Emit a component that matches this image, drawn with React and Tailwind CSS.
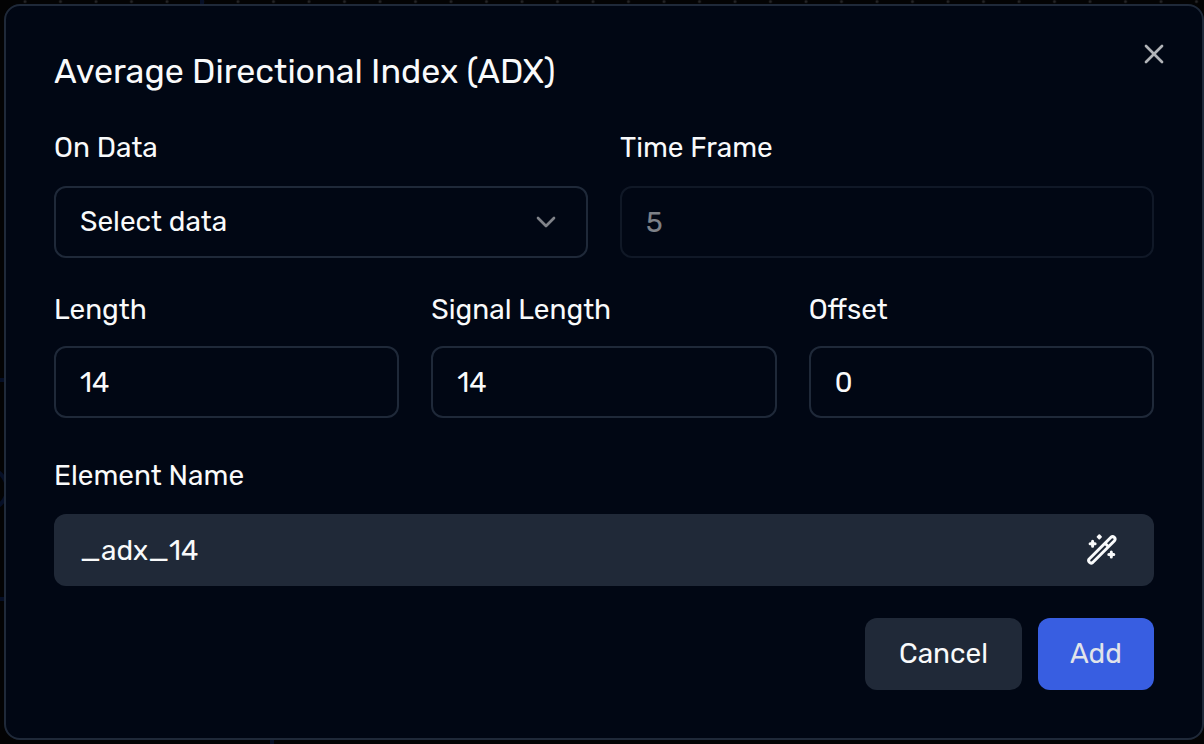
import React, { useState } from 'react';
import { ChevronDown, X } from 'lucide-react';

const params = [
    { id: 'length', label: 'Length' },
    { id: 'signal', label: 'Signal Length' },
    { id: 'offset', label: 'Offset' },
];

const inputClass = 'block h-[72px] w-full rounded-xl border-2 border-[#1f2939] bg-transparent px-6 text-[28px] text-gray-50 outline-none';
const labelClass = 'block text-[28px] leading-7';

const WandIcon = () => (
    <svg width="32" height="32" viewBox="0 0 32 32" fill="none" stroke="currentColor" strokeWidth="3" strokeLinecap="round" strokeLinejoin="round">
        <path d="M25 3.200a2.500 2.500 0 0 1 3.500 3.500L6.700 28.500a2.500 2.500 0 0 1-3.500-3.500Z M19 9.200l3.500 3.500" />
        <path d="M6.600 7.300v5M4.100 9.800h5M25.300 18v5M22.800 20.500h5" />
        <path d="M13.300 1.300l1.600 1.600-1.600 1.600-1.600-1.600Z" strokeWidth="2" fill="currentColor" />
    </svg>
);

// Slice of the strategy canvas that stays visible around the dialog
const CanvasBackdrop = () => (
    <svg className="absolute inset-0 h-full w-full" aria-hidden="true">
        <defs>
            <pattern id="dots" x="7" y="-16" width="35.5" height="35.5" patternUnits="userSpaceOnUse">
                <circle cx="18" cy="17.5" r="1.5" fill="#252527" />
            </pattern>
        </defs>
        <rect width="100%" height="6" fill="url(#dots)" />
        <g fill="none" stroke="#060f26" strokeWidth="4">
            <path d="M202 0v6M0 380h6M0 599h6M272 738v8" />
            <circle cx="-14" cy="489" r="21" />
        </g>
    </svg>
);

const App = () => {
    const [values, setValues] = useState({ length: '14', signal: '14', offset: '0' });
    const [name, setName] = useState('_adx_14');

    return (
        <div className="relative min-h-screen bg-[#030304] py-1 pl-1 font-['Rubik','Roboto',sans-serif] text-gray-50">
            <CanvasBackdrop />
            <div role="dialog" aria-labelledby="title" className="relative rounded-2xl border-2 border-[#1f2939] bg-[#010714] p-12">
                <button type="button" aria-label="Close" className="absolute right-8 top-8 text-[#b2b4b8]">
                    <X size={32} />
                </button>
                <h2 id="title" className="text-[34px] leading-9">Average Directional Index (ADX)</h2>

                <form onSubmit={(e) => e.preventDefault()}>
                    <div className="mt-11 grid grid-cols-2 gap-8">
                        <div className="space-y-6">
                            <label htmlFor="data" className={labelClass}>On Data</label>
                            <div className="relative">
                                <select id="data" className={`${inputClass} appearance-none`}>
                                    <option>Select data</option>
                                </select>
                                <ChevronDown size={32} className="pointer-events-none absolute right-[26px] top-5 text-[#808389]" />
                            </div>
                        </div>
                        <div className="space-y-6">
                            <label htmlFor="frame" className={labelClass}>Time Frame</label>
                            <input id="frame" disabled defaultValue="5" className={`${inputClass} opacity-50`} />
                        </div>
                    </div>

                    <div className="mt-[38px] grid grid-cols-3 gap-8">
                        {params.map((p) => (
                            <div key={p.id} className="space-y-[22px]">
                                <label htmlFor={p.id} className={labelClass}>{p.label}</label>
                                <input
                                    id={p.id}
                                    value={values[p.id]}
                                    onChange={(e) => setValues({ ...values, [p.id]: e.target.value })}
                                    className={inputClass}
                                />
                            </div>
                        ))}
                    </div>

                    <div className="mt-11 space-y-6">
                        <label htmlFor="name" className={labelClass}>Element Name</label>
                        <div className="flex h-[72px] items-center rounded-xl bg-[#202938] pl-[26px] pr-9">
                            <input
                                id="name"
                                value={name}
                                onChange={(e) => setName(e.target.value)}
                                className="h-full min-w-0 flex-1 bg-transparent text-[28px] outline-none"
                            />
                            <button type="button" aria-label="Generate name">
                                <WandIcon />
                            </button>
                        </div>
                    </div>

                    <div className="mt-8 flex justify-end gap-4 text-[28px]">
                        <button type="button" className="h-[72px] w-[157px] rounded-xl bg-[#202938]">Cancel</button>
                        <button type="submit" className="h-[72px] w-[116px] rounded-xl bg-[#385ee1] text-[#e1e4ea]">Add</button>
                    </div>
                </form>
            </div>
        </div>
    );
};

export default App;
